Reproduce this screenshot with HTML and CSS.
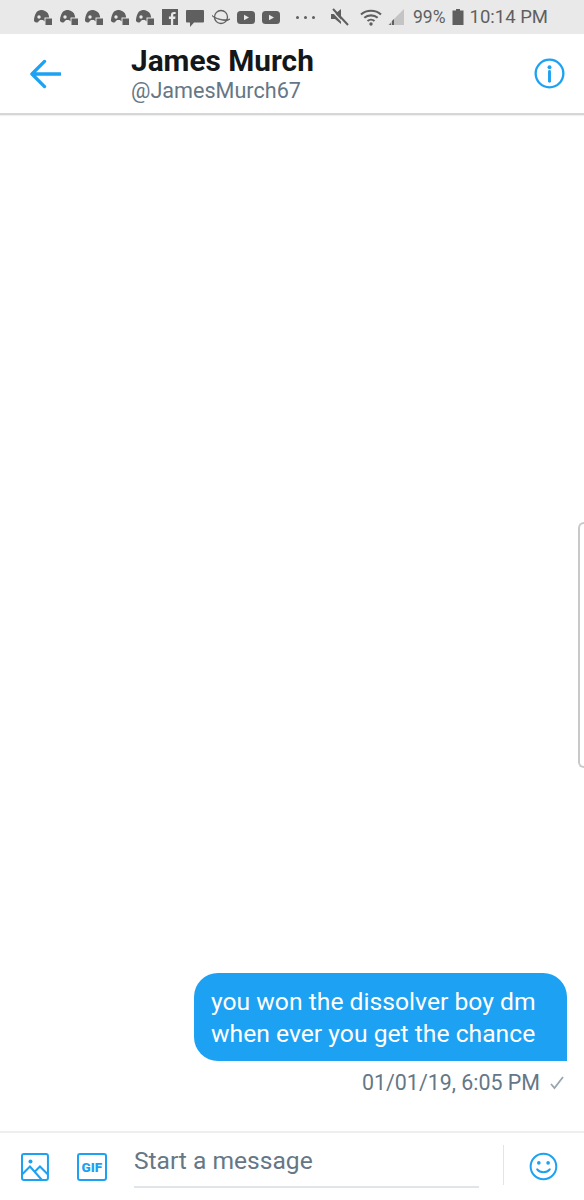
FILE: index.html
```html
<!DOCTYPE html>
<html lang="en">
<head>
<meta charset="utf-8">
<title>James Murch</title>
<link rel="stylesheet" href="styles.css">
</head>
<body>
<svg class="defs" width="0" height="0" aria-hidden="true">
  <symbol id="discord" viewBox="0 0 18 15">
    <path d="M4 1C5.500.3 6.500 0 7.500 0s2 .3 3.500 1c2.500 1 3.800 3 4.200 6.500H10.500V11.500L9 10H6L3.500 12.500C2 12.500.8 12 0 11 0 7 1.500 2.200 4 1Z"/>
    <circle cx="5" cy="7" r="1.700" fill="#e9e9e9"/>
    <rect x="11.500" y="8.500" width="6.500" height="6.500"/>
  </symbol>
  <symbol id="yt" viewBox="0 0 18 13">
    <rect width="18" height="13" rx="3.500"/>
    <path d="M7 3.800 12 6.500 7 9.200Z" fill="#e9e9e9"/>
  </symbol>
</svg>

<div class="status">
  <div class="status-left">
    <svg class="ic-d"><use href="#discord"/></svg>
    <svg class="ic-d"><use href="#discord"/></svg>
    <svg class="ic-d"><use href="#discord"/></svg>
    <svg class="ic-d"><use href="#discord"/></svg>
    <svg class="ic-d"><use href="#discord"/></svg>
    <svg class="ic-fb" viewBox="0 0 16 16"><path d="M0 0h16v16h-4.800v-6h2l.3-2.400h-2.300V6.200c0-.7.2-1.100 1.200-1.100h1.200V3c-.4 0-1-.1-1.700-.1-1.800 0-3 1.100-3 3.100v1.600h-2V10h2v6H0Z"/></svg>
    <svg class="ic-msg" viewBox="0 0 18 18"><path d="M1 0h16a1 1 0 0 1 1 1v10.500a1 1 0 0 1-1 1H8l-4 4.500v-4.500H1a1 1 0 0 1-1-1V1a1 1 0 0 1 1-1Z"/></svg>
    <svg class="ic-planet" viewBox="0 0 20 16"><circle cx="10" cy="8" r="6.500" fill="none" stroke="#5f5f5f" stroke-width="1.300"/><path d="M1 6.500c3 3 12 5.500 18 3.500-2 2-4 1.800-7 1.300C8 10.500 3 9 1 6.500Z" stroke="#5f5f5f" stroke-width=".8"/></svg>
    <svg class="ic-yt"><use href="#yt"/></svg>
    <svg class="ic-yt"><use href="#yt"/></svg>
  </div>
  <div class="status-right">
    <div class="dots"><i></i><i></i><i></i></div>
    <svg class="ic-mute" viewBox="0 0 18 18"><path d="M0 6h4L10 1v15L4 11H0Z"/><path d="M2 1 17 17" fill="none" stroke="#5f5f5f" stroke-width="2"/><path d="M.5 2.500 15 18" fill="none" stroke="#e9e9e9" stroke-width="1.200"/></svg>
    <svg class="ic-wifi" viewBox="0 0 22 17"><g fill="none" stroke="#5f5f5f" stroke-width="2.100"><path d="M1 5.500c5.500-5 14.500-5 20 0"/><path d="M4.300 8.800c3.700-3.300 9.700-3.300 13.400 0"/><path d="M7.500 12c2-1.700 5-1.700 7 0"/></g><circle cx="11" cy="15" r="1.700" fill="#5f5f5f"/></svg>
    <svg class="ic-signal" viewBox="0 0 16 16"><path d="M16 0v16H0Z" fill="#c4c4c4"/><path d="M1 16l2-2v2Zm3 0v-4l2-2v6Z" fill="#5f5f5f"/></svg>
    <span class="pct">99%</span>
    <svg class="ic-batt" viewBox="0 0 11 16"><path d="M3.500 0h4v1.500H11V16H0V1.500h3.500Z"/></svg>
    <span class="clock">10:14 PM</span>
  </div>
</div>

<header class="head">
  <svg class="ic-back" viewBox="0 0 32 30"><path d="M31 15H3M15 2 2 15l13 13" fill="none" stroke="#1da1f2" stroke-width="3.400" stroke-linecap="round" stroke-linejoin="round"/></svg>
  <div class="who">
    <div class="name">James Murch</div>
    <div class="handle">@JamesMurch67</div>
  </div>
  <svg class="ic-info" viewBox="0 0 32 32"><circle cx="16" cy="16" r="14.300" fill="none" stroke="#1da1f2" stroke-width="2.400"/><circle cx="16" cy="9.500" r="2" fill="#1da1f2"/><path d="M16 14v10" stroke="#1da1f2" stroke-width="3" fill="none" stroke-linecap="round"/></svg>
</header>

<main class="thread">
  <div class="bubble">you won the dissolver boy dm<br>when ever you get the chance</div>
  <div class="meta">
    <span>01/01/19, 6:05 PM</span>
    <svg class="ic-check" viewBox="0 0 14 14"><path d="M1 8l3.500 4L13 1" fill="none" stroke="#98a6b0" stroke-width="1.800"/></svg>
  </div>
</main>

<footer class="composer">
  <svg class="ic-image" viewBox="0 0 28 28"><rect x="1" y="1" width="26" height="26" rx="2" fill="none" stroke="#1da1f2" stroke-width="2"/><circle cx="9.500" cy="8.500" r="2" fill="#1da1f2"/><path d="M1 21.500 9 13.500 21 27M14 18.500l5-5 8 8" fill="none" stroke="#1da1f2" stroke-width="2"/></svg>
  <div class="gif">GIF</div>
  <div class="field">Start a message</div>
  <div class="sep"></div>
  <svg class="ic-smile" viewBox="0 0 30 30"><circle cx="15" cy="15" r="13.300" fill="none" stroke="#1da1f2" stroke-width="2.100"/><circle cx="10.200" cy="11.300" r="1.900" fill="#1da1f2"/><circle cx="19.800" cy="11.300" r="1.900" fill="#1da1f2"/><path d="M8.500 18c3 4 10 4 13 0" fill="none" stroke="#1da1f2" stroke-width="2.100" stroke-linecap="round"/></svg>
</footer>

<div class="edge"></div>
</body>
</html>
```

FILE: styles.css
```css
* { box-sizing: border-box; }
html, body { margin: 0; padding: 0; }
body {
  position: relative;
  width: 584px;
  height: 1200px;
  display: flex;
  flex-direction: column;
  overflow: hidden;
  background: #fff;
  font-family: Roboto, "Liberation Sans", sans-serif;
}
.defs { position: absolute; }

.status {
  height: 34px;
  flex: none;
  background: #e9e9e9;
  display: flex;
  align-items: center;
  justify-content: space-between;
  padding: 0 36px 0 34px;
  fill: #5f5f5f;
  color: #5f5f5f;
}
.status-left, .status-right { display: flex; align-items: center; }
.ic-d { width: 18px; height: 15px; margin-right: 7.500px; }
.ic-fb { width: 16px; height: 16px; margin-right: 8px; }
.ic-msg { width: 18px; height: 18px; margin: 3px 7px 0 0; }
.ic-planet { width: 20px; height: 16px; margin-right: 6px; }
.ic-yt { width: 18px; height: 13px; margin-right: 7.500px; }
.dots { display: flex; gap: 5px; margin-right: 16px; }
.dots i { width: 3px; height: 3px; border-radius: 50%; background: #5f5f5f; }
.ic-mute { width: 18px; height: 18px; margin-right: 11px; }
.ic-wifi { width: 22px; height: 17px; margin-right: 6px; }
.ic-signal { width: 16px; height: 16px; margin-right: 9px; }
.pct { font-size: 17.500px; margin-right: 6px; }
.ic-batt { width: 12px; height: 16px; margin-right: 6px; }
.clock { font-size: 18.500px; }

.head {
  height: 81px;
  flex: none;
  display: flex;
  align-items: center;
  padding: 0 19px 0 30px;
  border-bottom: 2px solid #d6d6d6;
  box-shadow: 0 1px 1px rgba(0, 0, 0, .06);
}
.ic-back { width: 31px; height: 30px; margin-right: 70px; }
.who { flex: 1; padding-bottom: 2px; }
.name { font-size: 29.800px; line-height: 35px; font-weight: 700; color: #14171a; }
.handle { font-size: 21.600px; line-height: 25px; color: #657786; }
.ic-info { width: 31px; height: 31px; }

.thread {
  flex: 1;
  display: flex;
  flex-direction: column;
  align-items: flex-end;
  justify-content: flex-end;
  padding: 0 17px 36px 0;
}
.bubble {
  width: 373px;
  height: 88px;
  padding: 13px 0 0 17px;
  background: #1da1f2;
  color: #fff;
  font-size: 24.700px;
  line-height: 32px;
  border-radius: 24px 24px 0 24px;
  white-space: nowrap;
}
.meta {
  display: flex;
  align-items: center;
  margin-top: 10px;
  font-size: 21.400px;
  line-height: 24px;
  color: #657786;
}
.ic-check { width: 14px; height: 14px; margin-left: 10px; margin-right: 3px; }

.composer {
  height: 69px;
  flex: none;
  display: flex;
  align-items: center;
  border-top: 2px solid #eeeeee;
  padding: 0 26px 0 21px;
}
.ic-image { width: 28px; height: 28px; margin-right: 28px; }
.gif {
  width: 30px;
  height: 28px;
  margin-right: 27px;
  border: 2px solid #1da1f2;
  border-radius: 3px;
  color: #1da1f2;
  font-size: 13.500px;
  font-weight: 900;
  line-height: 24px;
  text-align: center;
}
.field {
  align-self: flex-start;
  width: 346px;
  height: 55px;
  padding-top: 9px;
  border-bottom: 2px solid #e1e4e8;
  color: #657786;
  font-size: 24.600px;
  line-height: 38px;
}
.sep { width: 1px; height: 40px; margin: -4px 25px 0 24px; background: #e1e4e8; }
.ic-smile { width: 29px; height: 29px; }

.edge {
  position: absolute;
  top: 522px;
  right: 0;
  width: 6px;
  height: 246px;
  border: 2px solid #c9c9c9;
  border-right: 0;
  border-radius: 6px 0 0 6px;
}
```
